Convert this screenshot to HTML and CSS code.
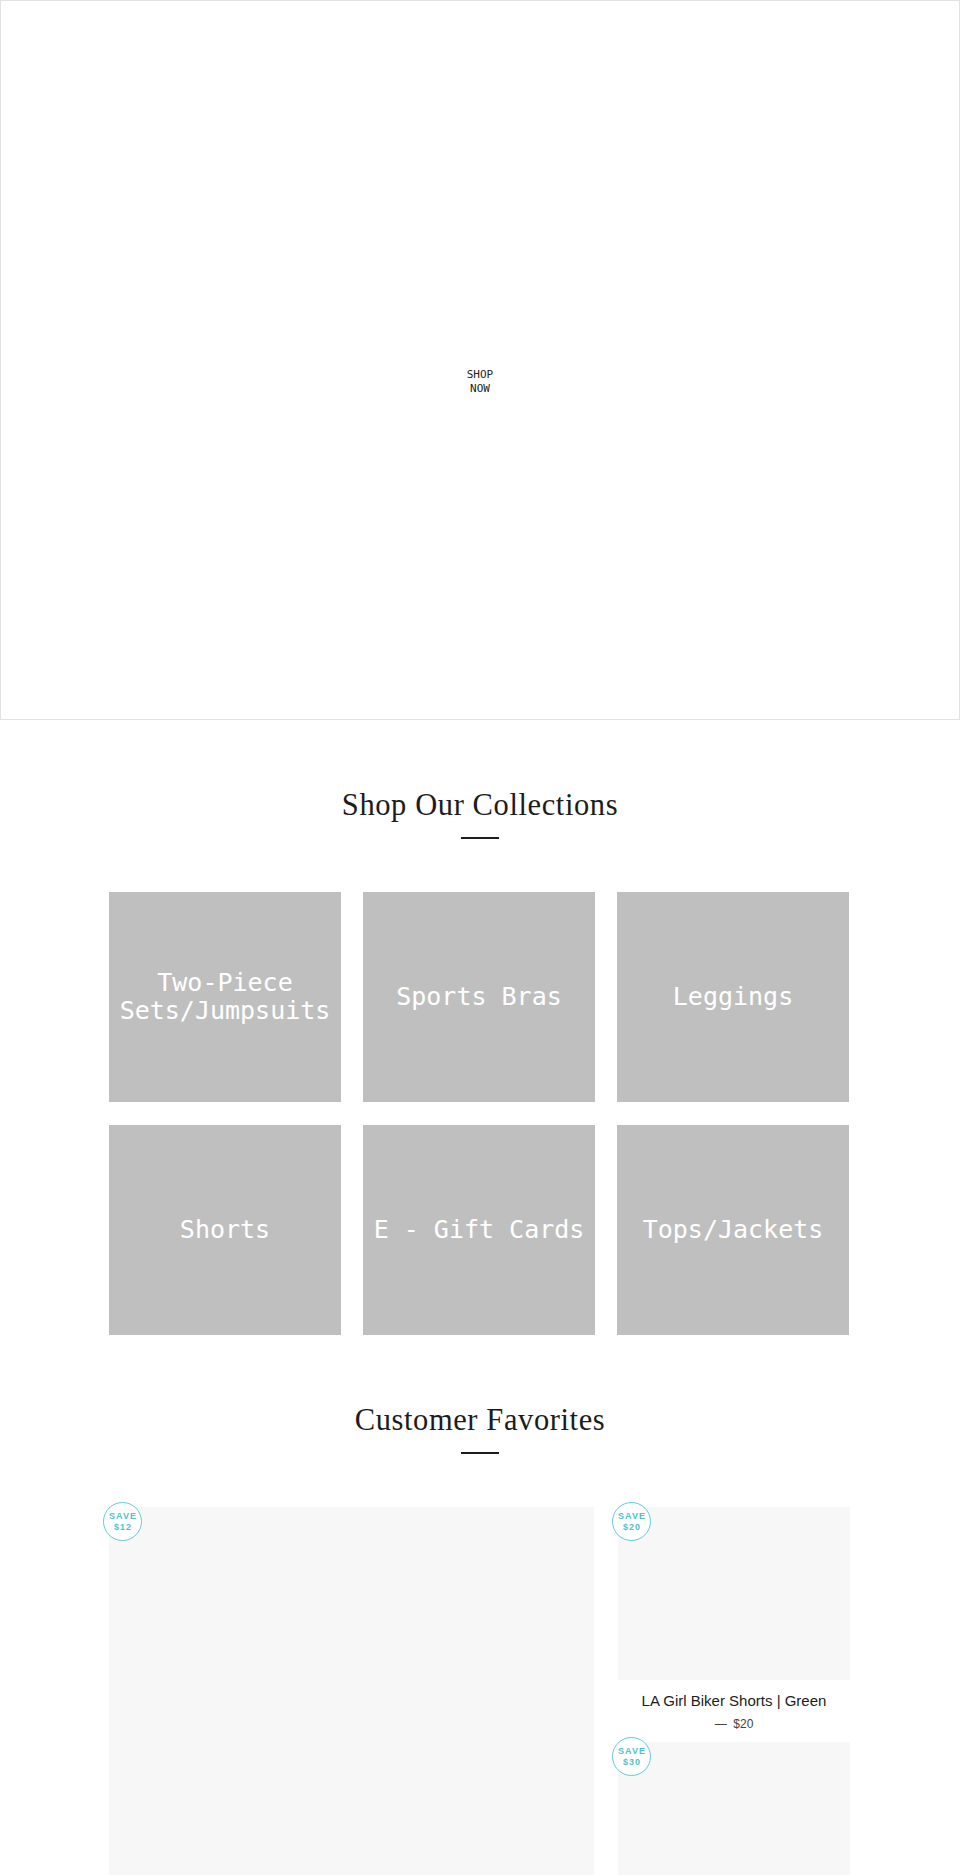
FILE: index.html
```html
<!DOCTYPE html>
<html lang="en">
<head>
<meta charset="utf-8">
<title>Shop</title>
<link rel="stylesheet" href="styles.css">
</head>
<body>
<section class="hero">
  <a class="hero-btn" href="#">SHOP NOW</a>
</section>

<section class="section">
  <h2 class="section-title">Shop Our Collections</h2>
  <div class="divider"></div>
  <div class="collections">
    <a class="collection" href="#"><span>Two-Piece Sets/Jumpsuits</span></a>
    <a class="collection" href="#"><span>Sports Bras</span></a>
    <a class="collection" href="#"><span>Leggings</span></a>
    <a class="collection" href="#"><span>Shorts</span></a>
    <a class="collection" href="#"><span>E - Gift Cards</span></a>
    <a class="collection" href="#"><span>Tops/Jackets</span></a>
  </div>
</section>

<section class="section">
  <h2 class="section-title">Customer Favorites</h2>
  <div class="divider"></div>
  <div class="products">
    <div class="product product-big">
      <div class="product-img big-img"></div>
      <div class="badge"><span>SAVE</span><span>$12</span></div>
    </div>
    <div class="side">
      <div class="product">
        <div class="product-img small-img"></div>
        <div class="badge"><span>SAVE</span><span>$20</span></div>
        <div class="product-title">LA Girl Biker Shorts | Green</div>
        <div class="product-price">— &nbsp;$20</div>
      </div>
      <div class="product">
        <div class="product-img small-img"></div>
        <div class="badge"><span>SAVE</span><span>$30</span></div>
      </div>
    </div>
  </div>
</section>
</body>
</html>
```

FILE: styles.css
```css
html, body {
  margin: 0;
  padding: 0;
  background: #fff;
}
body {
  font-family: "Liberation Sans", Arial, sans-serif;
  color: #222;
}
.hero {
  box-sizing: border-box;
  height: 720px;
  border: 1px solid #e2e2e2;
  display: flex;
  align-items: center;
  justify-content: center;
  padding-top: 44px;
}
.hero-btn {
  width: 40px;
  text-align: center;
  font-family: "DejaVu Sans Mono", monospace;
  font-size: 11px;
  line-height: 14px;
  color: #222;
  text-decoration: none;
}
.section {
  padding-top: 67px;
  display: flex;
  flex-direction: column;
  align-items: center;
}
.section-title {
  margin: 0;
  font-family: "Liberation Serif", "Times New Roman", serif;
  font-weight: normal;
  font-size: 30.5px;
  letter-spacing: 0.6px;
  line-height: 36px;
  color: #1c1c1c;
}
.divider {
  margin-top: 14px;
  width: 38px;
  height: 2px;
  background: #1c1c1c;
}
.collections {
  margin-top: 53px;
  margin-right: 2px;
  width: 740px;
  display: grid;
  grid-template-columns: repeat(3, 1fr);
  column-gap: 22px;
  row-gap: 23px;
}
.collection {
  height: 210px;
  background: #bfbfbf;
  display: flex;
  align-items: center;
  justify-content: center;
  text-align: center;
  text-decoration: none;
  color: #fff;
  font-family: "DejaVu Sans Mono", monospace;
  font-size: 25px;
  line-height: 28px;
}
.products {
  margin-top: 53px;
  margin-right: 1px;
  width: 741px;
  display: grid;
  grid-template-columns: 485px 232px;
  column-gap: 24px;
  align-items: start;
}
.product {
  position: relative;
}
.product-img {
  background: #f7f7f7;
}
.big-img {
  height: 486px;
}
.small-img {
  height: 173px;
}
.side {
  display: flex;
  flex-direction: column;
  gap: 9px;
}
.product-title {
  margin-top: 11px;
  text-align: center;
  font-size: 15px;
  line-height: 20px;
  color: #1c1c1c;
}
.product-price {
  margin-top: 4px;
  text-align: center;
  font-size: 12px;
  line-height: 18px;
  color: #444;
}
.badge {
  position: absolute;
  top: -5px;
  left: -6px;
  box-sizing: border-box;
  width: 39px;
  height: 39px;
  border: 1.5px solid #62cdd4;
  border-radius: 50%;
  background: #fff;
  display: flex;
  flex-direction: column;
  align-items: center;
  justify-content: center;
  color: #4cc3cb;
  font-size: 9px;
  font-weight: bold;
  letter-spacing: 1px;
  line-height: 11px;
}
.badge span {
  padding-left: 1px;
}
```
